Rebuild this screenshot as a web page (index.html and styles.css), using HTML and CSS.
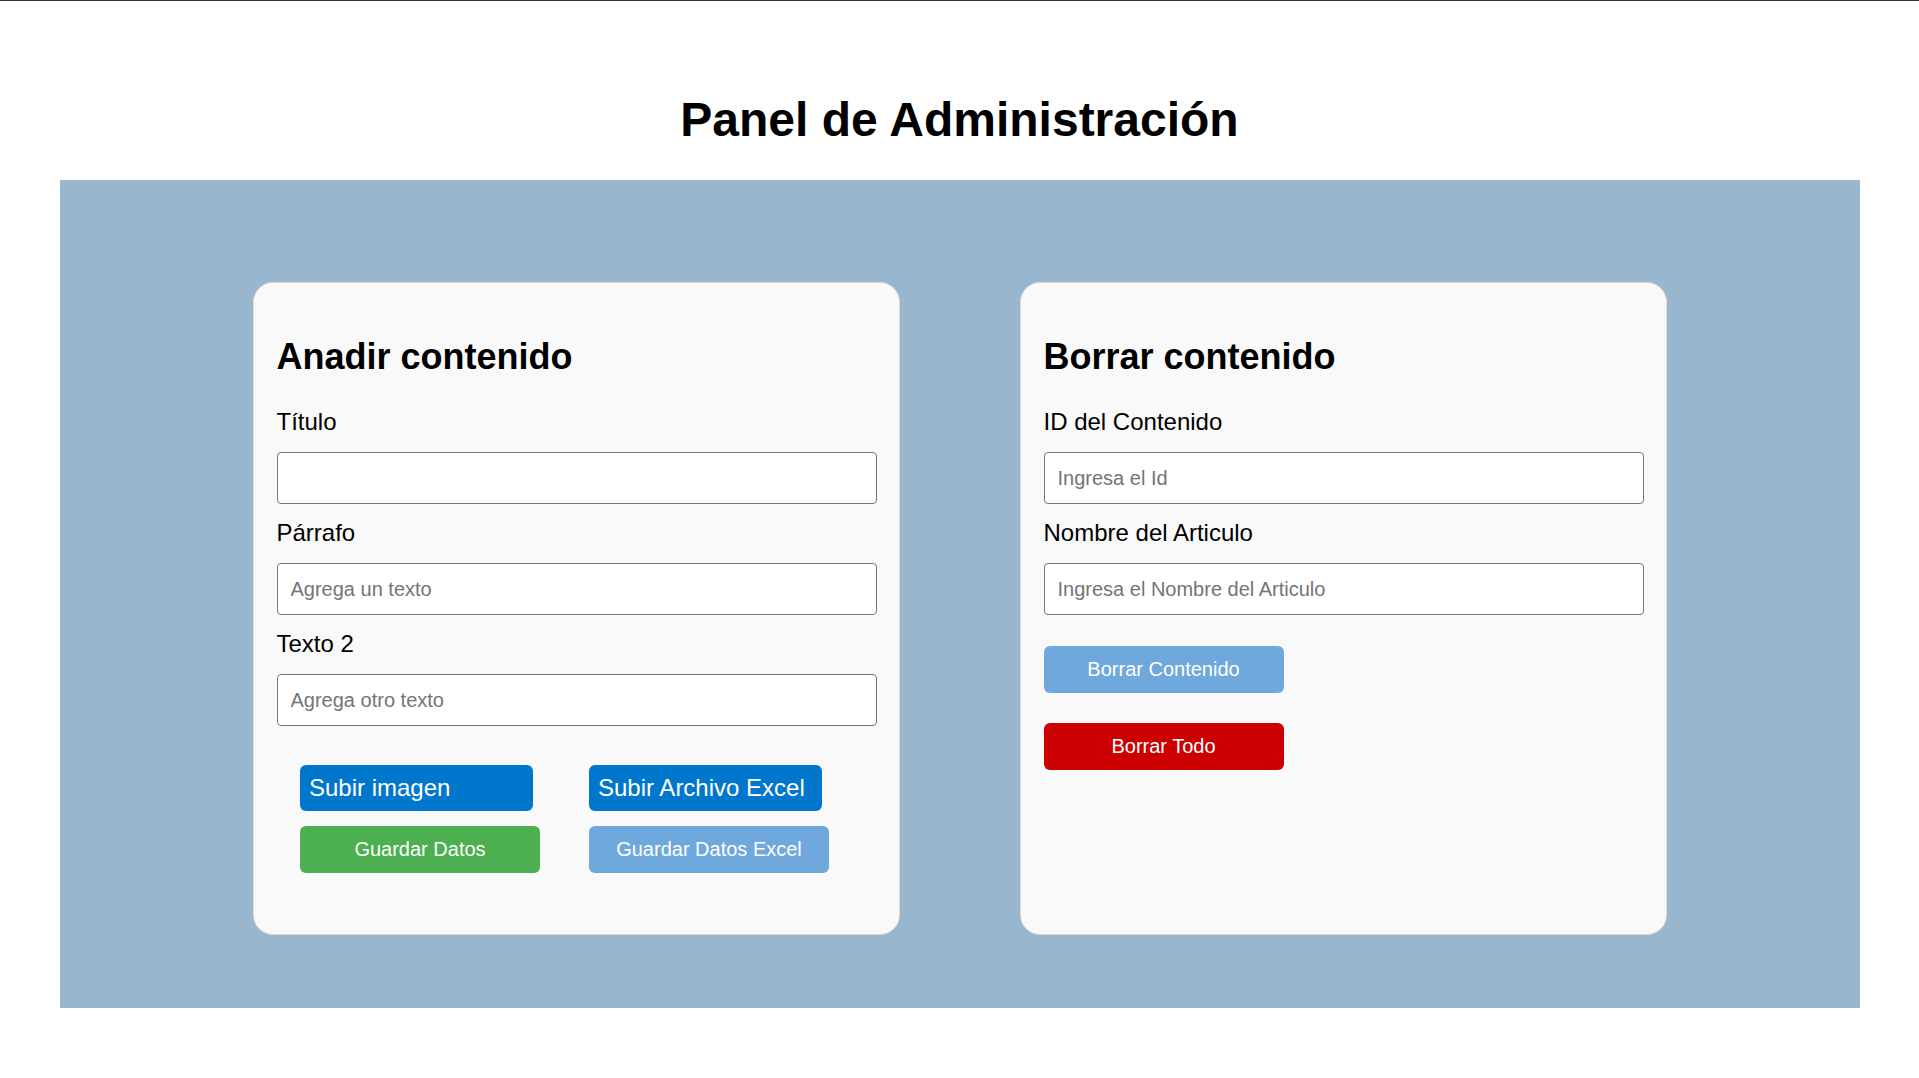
FILE: index.html
```html
<!DOCTYPE html>
<html lang="es">
<head>
<meta charset="utf-8">
<title>Panel de Administración</title>
<link rel="stylesheet" href="styles.css">
</head>
<body>
<header class="header">
  <h1 class="title">Panel de Administración</h1>
</header>
<main class="panel">
  <section class="card">
    <h2 class="card-title">Anadir contenido</h2>
    <label class="field-label" for="titulo">Título</label>
    <input class="field-input" id="titulo" type="text">
    <label class="field-label" for="parrafo">Párrafo</label>
    <input class="field-input" id="parrafo" type="text" placeholder="Agrega un texto">
    <label class="field-label" for="texto2">Texto 2</label>
    <input class="field-input" id="texto2" type="text" placeholder="Agrega otro texto">
    <div class="actions-grid">
      <span class="btn btn-upload">Subir imagen</span>
      <span class="btn btn-upload">Subir Archivo Excel</span>
      <button class="btn btn-action btn-green">Guardar Datos</button>
      <button class="btn btn-action btn-light">Guardar Datos Excel</button>
    </div>
  </section>
  <section class="card">
    <h2 class="card-title">Borrar contenido</h2>
    <label class="field-label" for="idc">ID del Contenido</label>
    <input class="field-input" id="idc" type="text" placeholder="Ingresa el Id">
    <label class="field-label" for="nombre">Nombre del Articulo</label>
    <input class="field-input" id="nombre" type="text" placeholder="Ingresa el Nombre del Articulo">
    <div class="actions-col">
      <button class="btn btn-action btn-light">Borrar Contenido</button>
      <button class="btn btn-action btn-red">Borrar Todo</button>
    </div>
  </section>
</main>
</body>
</html>
```
FILE: styles.css
```css
html {
  border-top: 1px solid #333333;
}

body {
  margin: 0;
  font-family: "Liberation Sans", Arial, sans-serif;
  color: #000;
  background: #ffffff;
}

.header {
  display: flex;
  justify-content: center;
}

.title {
  font-size: 48px;
  font-weight: bold;
  margin: 91px 0 33px;
}

.panel {
  margin: 0 59px 0 60px;
  padding: 102px 0 73px;
  background: #98b7cf;
  display: flex;
  justify-content: center;
  gap: 120px;
}

.card {
  box-sizing: border-box;
  width: 647px;
  background: #f9f9f9;
  border: 1px solid #d9d9d9;
  border-radius: 20px;
  padding: 0 22.5px 61px;
  display: flex;
  flex-direction: column;
  align-items: flex-start;
}

.card-title {
  font-size: 36px;
  font-weight: bold;
  margin: 53px 0 30px;
}

.field-label {
  display: block;
  font-size: 24px;
  margin-bottom: 16px;
}

.field-input {
  box-sizing: border-box;
  width: 100%;
  height: 52px;
  margin: 0 0 15px;
  padding: 0 13px;
  border: 1px solid #767676;
  border-radius: 4px;
  background: #ffffff;
  font-family: "Liberation Sans", Arial, sans-serif;
  font-size: 20px;
  color: #000;
}

.field-input::placeholder {
  color: #757575;
}

.actions-grid {
  display: grid;
  grid-template-columns: 289px auto;
  row-gap: 15px;
  margin: 24px 0 0 23.5px;
  align-items: start;
}

.actions-col {
  display: flex;
  flex-direction: column;
  gap: 30px;
  margin-top: 16px;
}

.btn {
  box-sizing: border-box;
  display: flex;
  align-items: center;
  border: none;
  border-radius: 6px;
  color: #ffffff;
  font-family: "Liberation Sans", Arial, sans-serif;
}

.btn-upload {
  width: 233px;
  height: 46px;
  padding: 0 9px;
  font-size: 24px;
  background: #0077cc;
}

.btn-action {
  width: 240px;
  height: 47px;
  justify-content: center;
  font-size: 20px;
}

.btn-green {
  background: #4caf50;
}

.btn-light {
  background: #6fa8dc;
}

.btn-red {
  background: #cc0000;
}
```
